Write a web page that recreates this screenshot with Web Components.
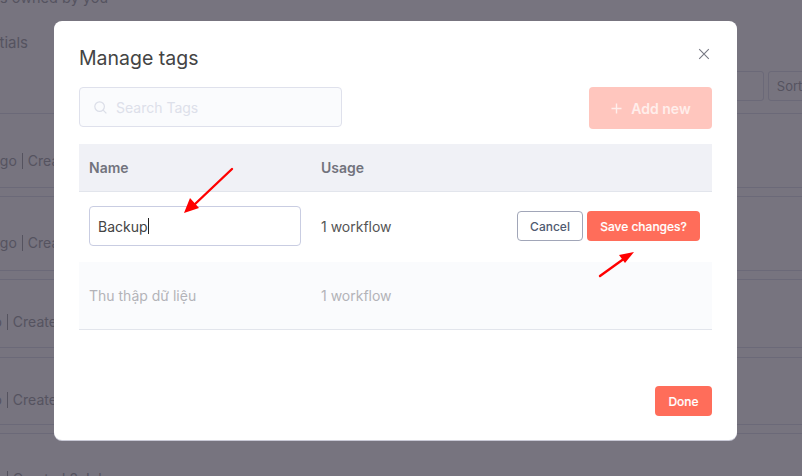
<!DOCTYPE html>
<html lang="en"><head><meta charset="utf-8"><title>Manage tags</title>
<style>html,body{margin:0;padding:0;background:#77747f}body{width:802px;height:476px;overflow:hidden;font-family:Inter,"Noto Sans",sans-serif}</style>
</head><body>
<app-screen>
  <bg-page slot="bg"></bg-page>
  <tags-modal slot="modal"></tags-modal>
  <red-arrows slot="over"></red-arrows>
</app-screen>
<script>
function def(name,html){customElements.define(name,class extends HTMLElement{constructor(){super();this.attachShadow({mode:'open'}).innerHTML=html;}});}
def('app-screen',`<style>:host{display:block;position:relative;width:802px;height:476px;overflow:hidden}
.m{position:absolute;left:54px;top:21px}.o{position:absolute;inset:0;pointer-events:none}</style>
<slot name="bg"></slot><div class="m"><slot name="modal"></slot></div><div class="o"><slot name="over"></slot></div>`);

def('bg-page',`<style>:host{display:block;width:802px;height:476px;background:#77747f;overflow:hidden;color:#55535f;font-size:14px}
.own{height:0;width:108px;display:flex;justify-content:flex-end;white-space:nowrap;font-size:14.5px;line-height:17px;transform:translateY(-11px)}
.cred{width:54px;overflow:hidden;display:flex;justify-content:flex-end;padding-right:26px;box-sizing:border-box;font-size:15px;line-height:20px;white-space:nowrap;margin-top:1px}
.hdr{height:114px;box-sizing:border-box;border-bottom:1px solid #6b6978}
.top{display:flex;justify-content:space-between;align-items:flex-start;padding-top:32px}
.btns{display:flex;gap:4px;margin-top:39px;margin-right:-28px}
.b{box-sizing:border-box;height:30px;border:1px solid #6b6978;border-radius:3px;padding:0 8px;display:flex;align-items:center;font-size:13px;white-space:nowrap}
.rows{display:flex;flex-direction:column}
.r{box-sizing:border-box;height:74px;border-bottom:1px solid #6b6978}
.c{width:54px;overflow:hidden;display:flex;align-items:center;height:18px;white-space:nowrap;font-size:14px;line-height:18px}
.g{height:9px;box-sizing:border-box;border-bottom:1px solid #6b6978}
.sep{flex:none;width:1px;height:16px;background:#55535f;margin:0 5px}
</style>
<div class="hdr"><div class="own"><span>All credentials owned by you</span></div>
<div class="top"><div class="cred">Credentials</div>
<div class="btns"><div class="b" style="width:60px"></div><div class="b">Sort by</div></div></div></div>
<div class="rows">
<div class="r" style="padding-top:38px"><div class="c"><span style="margin-left:-8px">ago</span><span class="sep"></span><span>Created</span></div></div><div class="g"></div>
<div class="r" style="padding-top:37px"><div class="c"><span style="margin-left:-8px">ago</span><span class="sep"></span><span>Created</span></div></div><div class="g"></div>
<div class="r" style="height:68px;padding-top:33px"><div class="c"><span style="margin-left:-23px">ago</span><span class="sep"></span><span>Created</span></div></div><div class="g" style="height:10px"></div>
<div class="r" style="height:67px;padding-top:33px"><div class="c"><span style="margin-left:-23px">ago</span><span class="sep"></span><span>Created</span></div></div><div class="g"></div>
<div class="r" style="border:0;height:60px;padding-top:36px"><div class="c" style="width:120px"><span style="margin-left:-23px">ago</span><span class="sep"></span><span>Created 2 July</span></div></div>
</div>`);

def('tag-button',`<style>:host{display:inline-flex;box-sizing:border-box;align-items:center;justify-content:center;height:30px;border-radius:4px;background:#ff6d5a;color:#fff;font-size:12px;font-weight:500;white-space:nowrap;-webkit-text-stroke:.15px currentColor}
:host([kind=ghost]){background:#fff;color:#4f5a70;border:1px solid #a1a6b8;-webkit-text-stroke:0}
:host([kind=off]){background:#ffc6be;color:#ffeeeb;font-size:14px;font-weight:600;height:42px;gap:9px;padding-left:1px;-webkit-text-stroke:0}</style><slot></slot>`);

def('tag-row',`<style>:host{display:grid;grid-template-columns:232px 1fr auto;align-items:center;box-sizing:border-box;padding:0 12px 0 10px;font-size:14px;color:#555}
:host([kind=head]){height:48px;background:#f0f1f6;border-bottom:1px solid #e2e5ec;color:#72737d;font-weight:600}
:host([kind=edit]){height:70px;padding-bottom:2px}
:host([kind=dim]){height:68px;background:#fafbfd;border-bottom:1px solid #e2e5ec;color:#b3b3b8}
.a{display:flex;gap:4px}</style>
<div><slot name="name"></slot></div><div><slot name="usage"></slot></div><div class="a"><slot name="actions"></slot></div>`);

def('tags-modal',`<style>:host{box-sizing:border-box;width:683px;height:419px;background:#fff;border-radius:8px;padding:25px 25px 24px;box-shadow:0 1px 0 #c9c9d6;color:#555;display:flex;flex-direction:column}
.head{display:flex;justify-content:space-between;align-items:center;height:24px}
h2{margin:0;font-size:19.5px;font-weight:400;color:#444;line-height:24px}
.x{margin-right:2px;display:flex;margin-top:-8px}
.tools{display:flex;justify-content:space-between;align-items:flex-start;margin-top:17px}
.search{box-sizing:border-box;width:263px;height:40px;background:#fafbfd;border:1px solid #dfe1ec;border-radius:4px;display:flex;align-items:center;padding-left:14px;gap:9px;color:#dde0ea;font-size:14px}
.table{margin-top:15px;display:flex;flex-direction:column}
.input{box-sizing:border-box;width:212px;height:40px;border:1px solid #c9cde2;border-radius:4px;display:flex;align-items:center;padding-left:8px;color:#444;font-size:14px;background:#fff}
.caret{display:inline-block;width:1px;height:16px;background:#222}
.foot{margin-top:auto;display:flex;justify-content:flex-end}
</style>
<div class="head"><h2>Manage tags</h2>
<svg class="x" width="12" height="12" viewBox="0 0 12 12" fill="none" stroke="#777883" stroke-width="1.1"><path d="M1.2 1.2l9.6 9.6M10.8 1.2l-9.6 9.6"/></svg></div>
<div class="tools"><div class="search">
<svg width="13" height="13" viewBox="0 0 13 13" fill="none" stroke="#dbdee8" stroke-width="1.2"><circle cx="5.6" cy="5.6" r="4.8"/><path d="M9.1 9.1L12.4 12.4"/></svg>
<span>Search Tags</span></div>
<tag-button kind="off" style="width:123px"><svg width="11" height="11" viewBox="0 0 11 11" fill="none" stroke="#ffeeeb" stroke-width="1.4"><path d="M5.5 .5v10M.5 5.5h10"/></svg><span>Add new</span></tag-button></div>
<div class="table">
<tag-row kind="head"><span slot="name">Name</span><span slot="usage">Usage</span></tag-row>
<tag-row kind="edit"><div slot="name" class="input"><span>Backup</span><span class="caret"></span></div><span slot="usage">1 workflow</span>
<tag-button slot="actions" kind="ghost" style="width:66px">Cancel</tag-button><tag-button slot="actions" style="width:113px">Save changes?</tag-button></tag-row>
<tag-row kind="dim"><span slot="name">Thu thập dữ liệu</span><span slot="usage">1 workflow</span></tag-row>
</div>
<div class="foot"><tag-button style="width:57px">Done</tag-button></div>`);

def('red-arrows',`<style>:host{display:block;width:802px;height:476px}svg{display:block}</style>
<svg width="802" height="476" viewBox="0 0 802 476" fill="none"><g stroke="#f00" stroke-width="2.4" stroke-linecap="round"><path d="M232 169L194 205"/><path d="M600 276L625 258"/></g>
<path d="M184 213L190 198L199 208Z" fill="#f00"/><path d="M634 252L619 255L625 263Z" fill="#f00"/></svg>`);
</script>
</body></html>
